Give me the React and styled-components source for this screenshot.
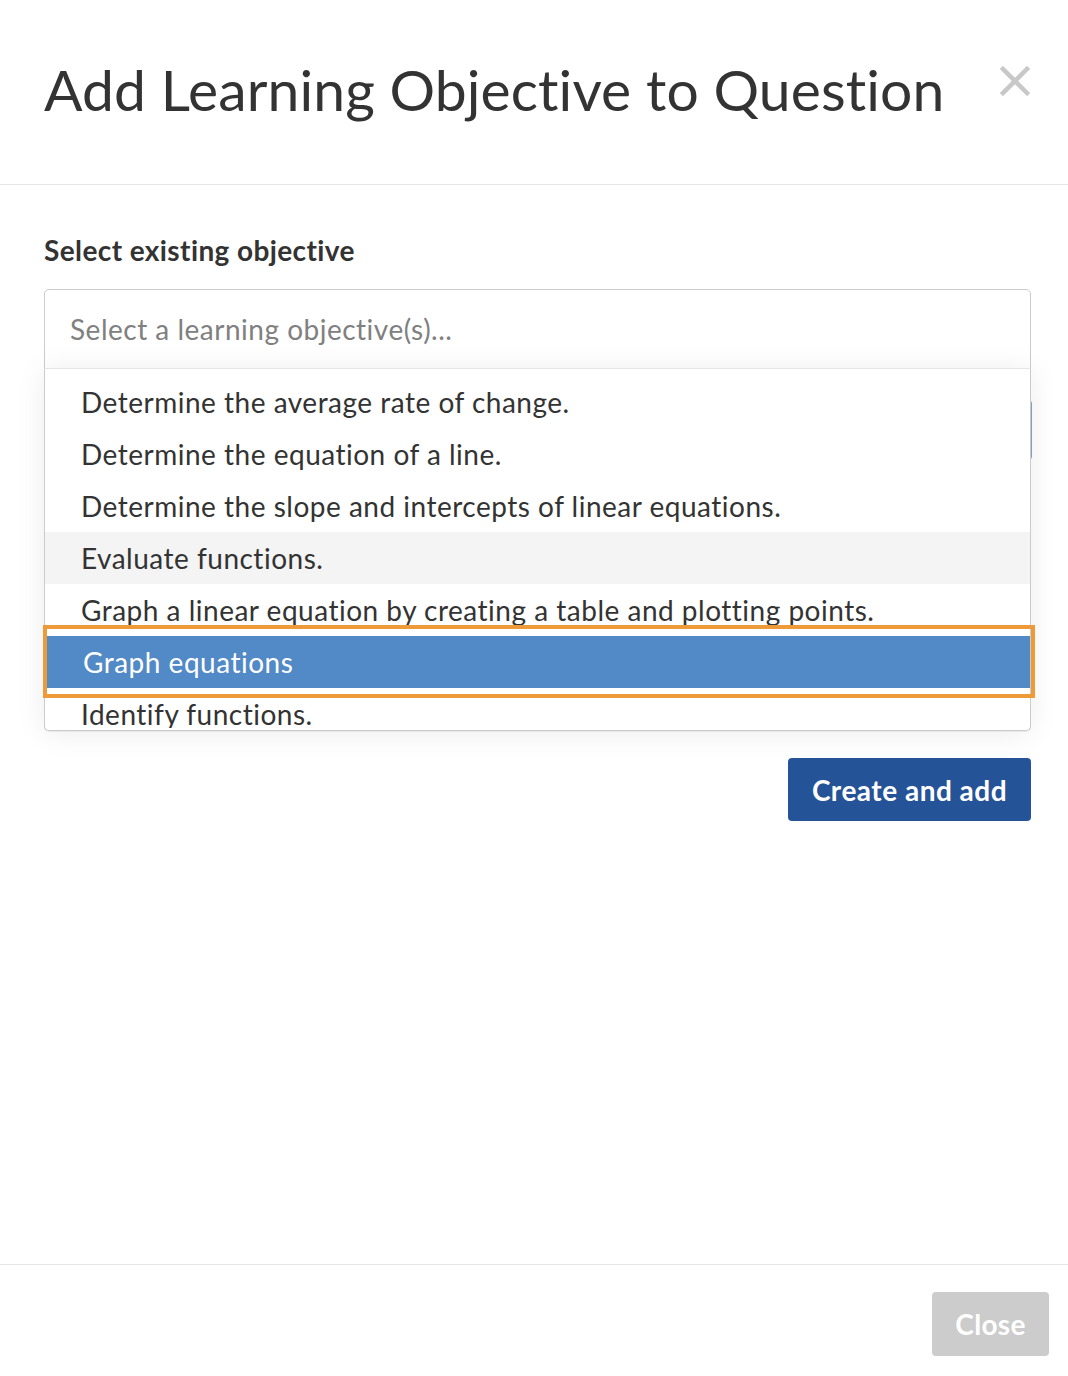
import styled, { createGlobalStyle } from "styled-components";

const GlobalStyle = createGlobalStyle`
  html, body {
    margin: 0;
    padding: 0;
    background: #ffffff;
    font-family: "Lato", "Open Sans", sans-serif;
    color: #333333;
  }
  * { box-sizing: border-box; }
`;

const Modal = styled.div`
  width: 1068px;
  min-height: 1376px;
  display: flex;
  flex-direction: column;
  background: #ffffff;
`;

const Header = styled.div`
  height: 185px;
  display: flex;
  align-items: flex-start;
  justify-content: space-between;
  padding: 54px 38px 0 44px;
  border-bottom: 1px solid #e5e5e5;
`;

const Title = styled.h1`
  margin: 0;
  font-size: 57px;
  font-weight: 400;
  line-height: 70px;
  color: #333333;
  letter-spacing: 0.1px;
`;

const CloseIcon = styled.button`
  border: 0;
  background: none;
  padding: 0;
  margin-top: 12px;
  width: 30px;
  height: 30px;
  cursor: pointer;
`;

const Body = styled.div`
  flex: 1;
  padding: 48px 37px 0 44px;
  display: flex;
  flex-direction: column;
`;

const Label = styled.div`
  font-size: 28px;
  font-weight: 700;
  letter-spacing: 0.4px;
  line-height: 34px;
  color: #333333;
  margin-bottom: 22px;
`;

const SelectWrap = styled.div`
  position: relative;
`;

const SelectBox = styled.div`
  height: 80px;
  border: 1px solid #cccccc;
  border-radius: 5px 5px 0 0;
  display: flex;
  align-items: center;
  padding: 0 25px;
  font-size: 28px;
  letter-spacing: 0.5px;
  color: #808080;
`;

const Menu = styled.div`
  position: absolute;
  left: 0;
  right: 0;
  top: 79px;
  z-index: 2;
  height: 363px;
  background: #ffffff;
  border: 1px solid #cccccc;
  border-top-color: #e6e6e6;
  border-radius: 0 0 5px 5px;
  box-shadow: 0 2px 30px rgba(0, 0, 0, 0.08), 0 1px 0 rgba(0, 0, 0, 0.06);
  padding-top: 7px;
`;

const MenuScroll = styled.div`
  height: 352px;
  overflow: hidden;
`;

const Option = styled.div`
  height: 52px;
  display: flex;
  align-items: center;
  padding: 0 36px;
  font-size: 28px;
  letter-spacing: 0.5px;
  color: ${(p) => (p.$selected ? "#ffffff" : "#333333")};
  background: ${(p) =>
    p.$selected ? "#5289c7" : p.$focused ? "#f4f4f4" : "transparent"};
  margin-left: ${(p) => (p.$selected ? "2px" : "0")};
`;

const FocusRing = styled.div`
  position: absolute;
  left: -2px;
  top: 256px;
  width: 992px;
  height: 73px;
  border: 4px solid #ef9a39;
  pointer-events: none;
`;

const AddRow = styled.div`
  display: flex;
  justify-content: flex-end;
  margin-top: 31px;
  margin-right: -1px;
`;

const SmallButton = styled.button`
  height: 60px;
  padding: 0 24px;
  border: 0;
  border-radius: 4px;
  background: #8aa3c9;
  color: #ffffff;
  font-family: inherit;
  font-size: 26px;
  font-weight: 700;
`;

const SubLabel = styled.div`
  font-size: 28px;
  font-weight: 700;
  color: #333333;
  margin-top: 50px;
  margin-bottom: 22px;
`;

const TextArea = styled.div`
  height: 164px;
  border: 1px solid #cccccc;
  border-radius: 4px;
`;

const ActionRow = styled.div`
  display: flex;
  justify-content: flex-end;
  margin-top: 28px;
`;

const PrimaryButton = styled.button`
  height: 63px;
  width: 243px;
  border: 0;
  border-radius: 4px;
  background: #255398;
  color: #ffffff;
  font-family: inherit;
  font-size: 28px;
  letter-spacing: 0.5px;
  font-weight: 700;
  cursor: pointer;
`;

const Footer = styled.div`
  height: 112px;
  border-top: 1px solid #e5e5e5;
  display: flex;
  justify-content: flex-end;
  align-items: flex-start;
  padding: 27px 19px 0 0;
`;

const DisabledButton = styled.button`
  width: 117px;
  height: 64px;
  border: 0;
  border-radius: 4px;
  background: #cccccc;
  color: #ffffff;
  font-family: inherit;
  font-size: 28px;
  letter-spacing: 0.3px;
  font-weight: 700;
`;

const options = [
  "Determine the average rate of change.",
  "Determine the equation of a line.",
  "Determine the slope and intercepts of linear equations.",
  "Evaluate functions.",
  "Graph a linear equation by creating a table and plotting points.",
  "Graph equations",
  "Identify functions.",
];

export default function App() {
  return (
    <Modal>
      <GlobalStyle />
      <Header>
        <Title>Add Learning Objective to Question</Title>
        <CloseIcon aria-label="Close">
          <svg width="30" height="30" viewBox="0 0 30 30">
            <path
              d="M3 3 L27 27 M27 3 L3 27"
              stroke="#c8c8c8"
              strokeWidth="4.5"
              strokeLinecap="square"
            />
          </svg>
        </CloseIcon>
      </Header>
      <Body>
        <Label>Select existing objective</Label>
        <SelectWrap>
          <SelectBox>Select a learning objective(s)...</SelectBox>
          <Menu>
            <MenuScroll>
              {options.map((o, i) => (
                <Option key={i} $focused={i === 3} $selected={i === 5}>
                  {o}
                </Option>
              ))}
            </MenuScroll>
            <FocusRing />
          </Menu>
          <AddRow>
            <SmallButton>Add</SmallButton>
          </AddRow>
        </SelectWrap>
        <SubLabel>Create new objective</SubLabel>
        <TextArea />
        <ActionRow>
          <PrimaryButton>Create and add</PrimaryButton>
        </ActionRow>
      </Body>
      <Footer>
        <DisabledButton>Close</DisabledButton>
      </Footer>
    </Modal>
  );
}
